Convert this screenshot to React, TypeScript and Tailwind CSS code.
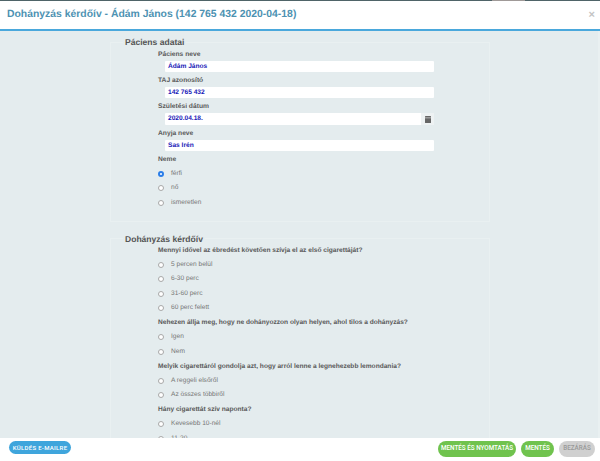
import React from "react";

const Field = ({ label, value, date }: { label: string; value: string; date?: boolean }) => (
  <div className="h-[26.4px]">
    <div className="h-[13px] text-[6.7px] leading-[13px] font-bold text-[#5a5a5a]">{label}</div>
    <div className="ml-[7px] mr-[55px] h-[11.5px] flex bg-white rounded-[1px]">
      <div className="flex-1 pl-[3px] text-[6.6px] leading-[12px] font-bold text-[#1a1ab8]">{value}</div>
      {date && (
        <div className="w-[13px] flex items-center justify-center bg-[#eef2f3]">
          <svg width="6" height="7" viewBox="0 0 6 7"><rect width="6" height="7" rx="0.5" fill="#666" /><rect x="0" y="1.6" width="6" height="0.6" fill="#eee" /></svg>
        </div>
      )}
    </div>
  </div>
);

const Radio = ({ label, checked }: { label: string; checked?: boolean }) => (
  <div className="h-[14.5px] pb-[1px] flex items-center text-[6.6px] text-[#777]">
    <span className={checked ? "w-[6px] h-[6px] rounded-full border-[2px] border-[#2a7de8] bg-white mr-[7px]" : "w-[6px] h-[6px] rounded-full border-[0.6px] border-[#a8a8a8] bg-white mr-[7px]"} />
    {label}
  </div>
);

const Q = ({ text }: { text: string }) => (
  <div className="h-[14.5px] text-[6.6px] leading-[14.5px] font-bold text-[#5a5a5a]">{text}</div>
);

const Legend = ({ text, h }: { text: string; h: string }) => (
  <legend className={h + " ml-[12px] px-[2px] text-[8.55px] leading-[11px] font-bold text-[#555]"}>{text}</legend>
);

export default function App() {
  return (
    <div className="w-[600px] h-[461px] overflow-hidden flex flex-col bg-white font-['Liberation_Sans',Arial,sans-serif] [text-rendering:geometricPrecision]">
      <div className="h-px bg-[#4f6468] shrink-0 flex">
        <div className="ml-[492px] w-[33px] bg-[#a09a98]" />
      </div>
      <div className="h-[30px] shrink-0 flex items-center justify-between pl-[7px] pr-[3px] border-b-[2px] border-[#4aa8dc]">
        <div className="text-[10.4px] font-bold text-[#4d92b2]">Dohányzás kérdőív - Ádám János (142 765 432 2020-04-18)</div>
        <div className="text-[11px] font-bold leading-none text-[#c4c4c4] pr-[2px]">×</div>
      </div>
      <div className="flex-1 overflow-hidden bg-[#e4ecee] flex justify-center border-r-2 border-[#e9f0f1]">
        <div className="w-[380px] ml-[2px] pt-[5.5px]">
          <fieldset className="border border-[#e9f0f1] pb-[10.5px] mb-[12px]">
            <Legend text="Páciens adatai" h="h-[11px]" />
            <div className="pl-[47px]">
              <Field label="Páciens neve" value="Ádám János" />
              <Field label="TAJ azonosító" value="142 765 432" />
              <Field label="Születési dátum" value="2020.04.18." date />
              <Field label="Anyja neve" value="Sas Irén" />
              <div className="h-[13px] text-[6.7px] leading-[13px] font-bold text-[#5a5a5a]">Neme</div>
              <div className="pt-[1px]">
                <Radio label="férfi" checked />
                <Radio label="nő" />
                <Radio label="ismeretlen" />
              </div>
            </div>
          </fieldset>
          <fieldset className="border border-[#e9f0f1]">
            <Legend text="Dohányzás kérdőív" h="h-[9.5px]" />
            <div className="pl-[47px]">
              <Q text="Mennyi idővel az ébredést követően szívja el az első cigarettáját?" />
              <Radio label="5 percen belül" />
              <Radio label="6-30 perc" />
              <Radio label="31-60 perc" />
              <Radio label="60 perc felett" />
              <Q text="Nehezen állja meg, hogy ne dohányozzon olyan helyen, ahol tilos a dohányzás?" />
              <Radio label="Igen" />
              <Radio label="Nem" />
              <Q text="Melyik cigarettáról gondolja azt, hogy arról lenne a legnehezebb lemondania?" />
              <Radio label="A reggeli elsőről" />
              <Radio label="Az összes többiről" />
              <Q text="Hány cigarettát szív naponta?" />
              <Radio label="Kevesebb 10-nél" />
              <Radio label="11-20" />
            </div>
          </fieldset>
        </div>
      </div>
      <div className="h-[23px] shrink-0 bg-white flex items-start pl-[9px] pr-[5px] pt-[3px] font-['Roboto',sans-serif]">
        <button className="h-[13px] w-[62px] rounded-full bg-[#3fa5dc] text-white text-[6px] font-medium tracking-[0.3px] whitespace-nowrap">KÜLDÉS E-MAILRE</button>
        <div className="ml-auto flex gap-[5px]">
          <button className="h-[16px] w-[78px] rounded-full bg-[#70c34e] text-white text-[6.3px] font-medium whitespace-nowrap">MENTÉS ÉS NYOMTATÁS</button>
          <button className="h-[16px] w-[33px] rounded-full bg-[#70c34e] text-white text-[6.3px] font-medium whitespace-nowrap">MENTÉS</button>
          <button className="h-[16px] w-[36px] rounded-full bg-[#d0d0d0] text-[#999] text-[6.3px] font-medium whitespace-nowrap">BEZÁRÁS</button>
        </div>
      </div>
    </div>
  );
}
